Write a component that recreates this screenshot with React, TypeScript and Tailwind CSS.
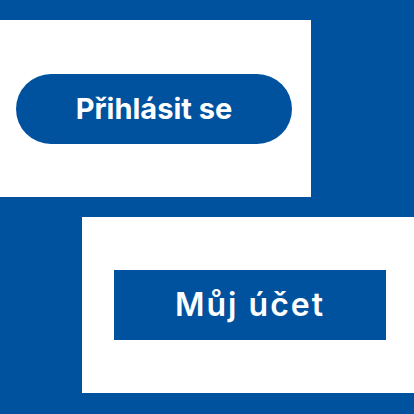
import React from 'react';

export default function App() {
  return (
    <div className="w-[414px] h-[414px] bg-[#00529f] pt-[20px] overflow-hidden" style={{ fontFamily: 'Inter, "Noto Sans", sans-serif' }}>
      <div className="w-[311px] h-[177px] bg-white flex items-center pl-[16px]">
        <button className="w-[276px] h-[70px] rounded-full bg-[#00529f] text-white text-[29px] font-bold flex items-center justify-center">
          Přihlásit se
        </button>
      </div>
      <div className="ml-[82px] mt-[20px] w-[332px] h-[176px] bg-white flex items-center pl-[32px]">
        <button className="w-[272px] h-[70px] bg-[#00529f] text-white text-[32px] font-semibold tracking-[2px] flex items-center justify-center">
          Můj účet
        </button>
      </div>
    </div>
  );
}
